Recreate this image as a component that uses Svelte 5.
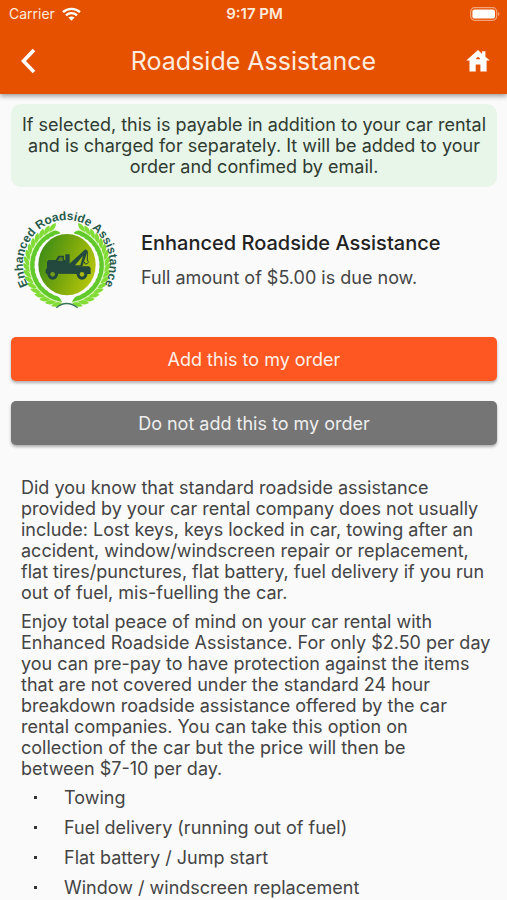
<script>
	const notice = [
		'If selected, this is payable in addition to your car rental',
		'and is charged for separately. It will be added to your',
		'order and confimed by email.'
	];

	const paragraphs = [
		[
			'Did you know that standard roadside assistance',
			'provided by your car rental company does not usually',
			'include: Lost keys, keys locked in car, towing after an',
			'accident, window/windscreen repair or replacement,',
			'flat tires/punctures, flat battery, fuel delivery if you run',
			'out of fuel, mis-fuelling the car.'
		],
		[
			'Enjoy total peace of mind on your car rental with',
			'Enhanced Roadside Assistance. For only $2.50 per day',
			'you can pre-pay to have protection against the items',
			'that are not covered under the standard 24 hour',
			'breakdown roadside assistance offered by the car',
			'rental companies. You can take this option on',
			'collection of the car but the price will then be',
			'between $7-10 per day.'
		]
	];

	const covered = [
		'Towing',
		'Fuel delivery (running out of fuel)',
		'Flat battery / Jump start',
		'Window / windscreen replacement'
	];

	// laurel leaves, in degrees round the badge from the bottom to the top
	const leaves = Array.from({ length: 17 }, (_, i) => 11 + i * 9);
</script>

<header>
	<div class="status">
		<span class="carrier">
			Carrier
			<svg width="19" height="14" viewBox="0 0 19 14" aria-hidden="true">
				<g fill="none" stroke="#fff" stroke-width="2.4">
					<path d="M1 5.2C5.8.7 13.2.7 18 5.2" />
					<path d="M4 8.3c3.2-2.9 7.8-2.9 11 0" />
				</g>
				<path d="M6.4 10.6c1.8-1.6 4.4-1.6 6.2 0L9.5 13.8z" fill="#fff" />
			</svg>
		</span>
		<span class="time">9:17 PM</span>
		<svg class="battery" width="30" height="14" viewBox="0 0 30 14" aria-hidden="true">
			<rect x=".7" y=".7" width="26" height="12.6" rx="4" fill="none" stroke="#f3a578" stroke-width="1.2" />
			<rect x="2.4" y="2.4" width="22.6" height="9.2" rx="2.2" fill="#fff" />
			<path d="M28 5c1.8.6 1.8 3.4 0 4z" fill="#f3a578" />
		</svg>
	</div>
	<nav>
		<button class="icon" aria-label="Back">
			<svg width="16" height="26" viewBox="0 0 16 26">
				<path d="M13 2 2.500 13 13 24" fill="none" stroke="#fff" stroke-width="3.600" />
			</svg>
		</button>
		<h1>Roadside Assistance</h1>
		<button class="icon" aria-label="Home">
			<svg width="24" height="22" viewBox="0 0 24 22">
				<path
					d="M12 0 .3 10.600h3.200V21.400h6.200v-6.900h4.700v6.900h6.200V10.600h3.200L19.400 6.800V1.300h-3.300V4zM10.100 9.300c0-2.600 3.900-2.600 3.900 0z"
					fill="#fff"
					fill-rule="evenodd"
				/>
			</svg>
		</button>
	</nav>
</header>

<main>
	<p class="notice">
		{#each notice as line, i}
			{#if i}<br />{/if}{line}
		{/each}
	</p>

	<section class="product">
		<svg class="badge" width="110" height="106" viewBox="30 30 330 318" role="img" aria-label="Enhanced Roadside Assistance">
			<defs>
				<linearGradient id="disc" x1="0" y1=".3" x2="1" y2=".7">
					<stop offset="0" stop-color="#3d8c16" />
					<stop offset=".5" stop-color="#7ba80c" />
					<stop offset="1" stop-color="#b9c80b" />
				</linearGradient>
				<path id="ring" d="M196 341a130 133 0 0 1 0-266a130 133 0 0 1 0 266" />
				<g id="laurel">
					{#each leaves as deg}
						<g transform="rotate({deg} 198 211) translate(198 323)">
							<path d="M7 0C-1-14-11-18-23-16-20-5-9 2 7 0z" fill="#62c92b" />
							<path d="M7 0C1 14-11 20-23 17-20 6-9-1 7 0z" fill="#82dc35" />
							<path d="M7 0H-15" stroke="#d9f7bc" stroke-width="3" />
						</g>
					{/each}
				</g>
			</defs>
			<use href="#laurel" />
			<use href="#laurel" transform="matrix(-1 0 0 1 396 0)" />
			<ellipse cx="198" cy="209" rx="89" ry="95" fill="#fafafa" />
			<ellipse cx="198" cy="209" rx="86" ry="92" fill="url(#disc)" />
			<path d="M166 338q30-25 64 0" fill="none" stroke="#397557" stroke-width="4" />
			<g fill="#23483d">
				<path d="M134 236v-12l4-6v-18l5-5h21l8-13h17v13h4v-17h13v36h58l5 5v18z" />
				<path d="M204 218l-3-8 52-47 7 4-16 47z" />
				<circle cx="155" cy="238" r="16" />
				<circle cx="243" cy="238" r="16" />
			</g>
			<path d="m222 211 24-29-8 29z" fill="#9fba10" />
			<path d="M170 198l6-11h9v11z" fill="#547f24" />
			<path d="M259 169v26q7 10-4 12-5 0-5-6" fill="none" stroke="#23483d" stroke-width="3" />
			<circle cx="155" cy="238" r="7" fill="#719b1b" />
			<circle cx="243" cy="238" r="7" fill="#a7b817" />
			<text text-anchor="middle">
				<textPath href="#ring" startOffset="50%">Enhanced Roadside Assistance</textPath>
			</text>
		</svg>
		<div>
			<h2>Enhanced Roadside Assistance</h2>
			<p>Full amount of $5.00 is due now.</p>
		</div>
	</section>

	<div class="actions">
		<button class="add">Add this to my order</button>
		<button class="skip">Do not add this to my order</button>
	</div>

	<section class="info">
		{#each paragraphs as lines}
			<p>
				{#each lines as line, i}
					{#if i}<br />{/if}{line}
				{/each}
			</p>
		{/each}
		<ul>
			{#each covered as item}
				<li>{item}</li>
			{/each}
		</ul>
	</section>
</main>

<style>
	:global(body) {
		background: #fafafa;
		color: #444;
		font-family: Inter, sans-serif;
		font-size: 18px;
		line-height: 21px;
	}

	h1,
	h2,
	p,
	ul {
		margin: 0;
	}

	button {
		border: 0;
		font: inherit;
		cursor: pointer;
	}

	header {
		background: #e65100;
		color: #ffebdd;
		box-shadow: 0 2px 5px rgba(0, 0, 0, 0.4);
	}

	.status {
		display: grid;
		grid-template-columns: 1fr auto 1fr;
		align-items: center;
		height: 27px;
		padding: 0 7px 0 9px;
		font-size: 14px;
	}

	.carrier {
		display: flex;
		align-items: center;
		gap: 7px;
	}

	.time {
		font-size: 15px;
		font-weight: 600;
	}

	.battery {
		justify-self: end;
	}

	nav {
		display: flex;
		align-items: center;
		height: 67px;
		padding: 0 8px;
	}

	.icon {
		display: flex;
		align-items: center;
		justify-content: center;
		width: 42px;
		height: 42px;
		padding: 0;
		background: none;
	}

	h1 {
		flex: 1;
		font-size: 25px;
		font-weight: 400;
		line-height: 32px;
		text-align: center;
	}

	main {
		padding: 10px 10px 0 11px;
	}

	.notice {
		padding: 10px 0;
		border-radius: 10px;
		background: #e8f5e9;
		color: #2f3b31;
		text-align: center;
		white-space: nowrap;
	}

	.product {
		display: flex;
		align-items: center;
		gap: 20px;
		padding: 18px 0 26px;
	}

	.badge {
		flex: none;
	}

	.badge text {
		fill: #285c4c;
		font: bold 36px 'Liberation Sans', sans-serif;
	}

	h2 {
		margin-bottom: 10px;
		color: #222;
		font-size: 20px;
		font-weight: 500;
		line-height: 28px;
	}

	.actions {
		display: grid;
		gap: 20px;
	}

	.actions button {
		height: 44px;
		border-radius: 5px;
		color: #fff0e8;
		box-shadow: 0 2px 3px rgba(0, 0, 0, 0.3);
	}

	.actions .add {
		background: #ff5722;
	}

	.actions .skip {
		background: #757575;
		color: #eee;
	}

	.info {
		padding: 32px 0 0 10px;
		white-space: nowrap;
	}

	.info p {
		margin-bottom: 8px;
	}

	ul {
		display: grid;
		gap: 9px;
		padding: 0;
		list-style: none;
	}

	li {
		display: flex;
		align-items: center;
	}

	li::before {
		content: '';
		width: 3px;
		height: 3px;
		margin: 0 27px 0 13px;
		background: #333;
	}
</style>
